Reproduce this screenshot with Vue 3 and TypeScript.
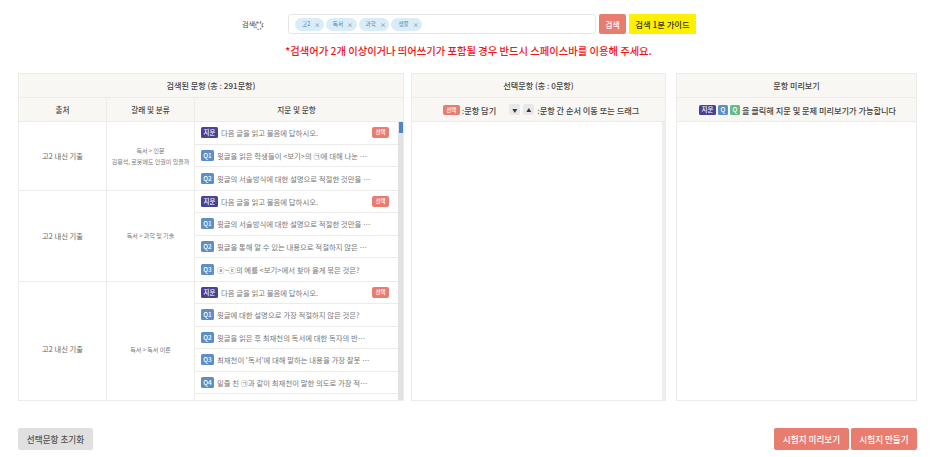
<script setup lang="ts">
interface Row { badge: string; text: string; pick?: boolean }
interface Group { source: string; cats: string[]; rows: Row[] }
const tags: string[] = ['고2', '독서', '과학', '생물']
const lead = '다음 글을 읽고 물음에 답하시오.'
const groups: Group[] = [
  { source: '고2 내신 기출', cats: ['독서 > 인문', '김용석, 로봇에도 인권이 있을까'], rows: [
    { badge: '지문', text: lead, pick: true },
    { badge: 'Q1', text: '윗글을 읽은 학생들이 <보기>의 ㉠에 대해 나눈 …' },
    { badge: 'Q2', text: '윗글의 서술방식에 대한 설명으로 적절한 것만을 …' },
  ] },
  { source: '고2 내신 기출', cats: ['독서 > 과학 및 기술'], rows: [
    { badge: '지문', text: lead, pick: true },
    { badge: 'Q1', text: '윗글의 서술방식에 대한 설명으로 적절한 것만을 …' },
    { badge: 'Q2', text: '윗글을 통해 알 수 있는 내용으로 적절하지 않은 …' },
    { badge: 'Q3', text: 'ⓐ~ⓔ의 예를 <보기>에서 찾아 옳게 묶은 것은?' },
  ] },
  { source: '고2 내신 기출', cats: ['독서 > 독서 이론'], rows: [
    { badge: '지문', text: lead, pick: true },
    { badge: 'Q1', text: '윗글에 대한 설명으로 가장 적절하지 않은 것은?' },
    { badge: 'Q2', text: '윗글을 읽은 후 최재천의 독서에 대한 독자의 반…' },
    { badge: 'Q3', text: "최재천이 '독서'에 대해 말하는 내용을 가장 잘못 …" },
    { badge: 'Q4', text: '밑줄 친 ㉠과 같이 최재천이 말한 의도로 가장 적…' },
    { badge: '', text: '' },
  ] },
]
</script>

<template>
  <div class="page">
    <div class="search">
      <span class="label">검색어:<svg class="busy" viewBox="0 0 12 12" width="10" height="10"><circle cx="6" cy="6" r="4" fill="#fff" stroke="#666" stroke-width="1.4" stroke-dasharray="1.6 1.6" /></svg></span>
      <div class="input">
        <span v-for="t in tags" :key="t" class="tag">{{ t }}<i>×</i></span>
      </div>
      <button class="btn coral search-btn">검색</button>
      <button class="guide">검색 1분 가이드</button>
    </div>
    <p class="warn">*검색어가 2개 이상이거나 띄어쓰기가 포함될 경우 반드시 스페이스바를 이용해 주세요.</p>

    <div class="panels">
      <section class="panel">
        <h2 class="head">검색된 문항 (총 : 291문항)</h2>
        <div class="cols">
          <div class="c1">출처</div>
          <div class="c2">갈래 및 분류</div>
          <div class="c3">지문 및 문항</div>
        </div>
        <div class="body">
          <div class="list">
            <div v-for="(g, i) in groups" :key="i" class="group">
              <div class="c1 source">{{ g.source }}</div>
              <div class="c2 cat"><span v-for="c in g.cats" :key="c">{{ c }}</span></div>
              <div class="c3 rows">
                <div v-for="r in g.rows" :key="r.badge" class="row">
                  <template v-if="r.badge">
                    <b class="badge" :class="r.badge === '지문' ? 'navy' : 'blue'">{{ r.badge }}</b>
                    <span class="txt">{{ r.text }}</span>
                    <b v-if="r.pick" class="pick">선택</b>
                  </template>
                </div>
              </div>
            </div>
          </div>
          <div class="track"><div class="thumb"></div></div>
        </div>
      </section>

      <section class="panel">
        <h2 class="head">선택문항 (총 : 0문항)</h2>
        <div class="sub shift">
          <b class="pick">선택</b><span>:문항 담기</span>
          <span class="arrows"><i>▼</i><i>▲</i></span><span>:문항 간 순서 이동 또는 드래그</span>
        </div>
        <div class="body"><div class="list"></div><div class="track thin"></div></div>
      </section>

      <section class="panel">
        <h2 class="head">문항 미리보기</h2>
        <div class="sub tight">
          <b class="badge navy">지문</b><b class="badge blue q">Q</b><b class="badge green q">Q</b>
          <span>을 클릭해 지문 및 문제 미리보기가 가능합니다</span>
        </div>
        <div class="body"></div>
      </section>
    </div>

    <div class="foot">
      <button class="btn gray">선택문항 초기화</button>
      <div class="right">
        <button class="btn coral wide">시험지 미리보기</button>
        <button class="btn coral">시험지 만들기</button>
      </div>
    </div>
  </div>
</template>

<style>
html, body { margin: 0; background: #fff; }
</style>

<style scoped>
.page { width: 936px; height: 457px; box-sizing: border-box; padding: 14px 19px 0 18px; overflow: hidden; font-family: "Noto Sans CJK KR", "Noto Sans", sans-serif; color: #555; }
.search { display: flex; align-items: center; height: 20px; padding-left: 224px; }
.label { width: 46px; position: relative; font-size: 7.2px; color: #444; }
.busy { position: absolute; left: 12px; top: 2px; }
.input { width: 308px; height: 20px; box-sizing: border-box; border: 1px solid #e6e6e6; border-radius: 3px; display: flex; align-items: center; gap: 2px; padding-left: 6px; }
.tag { height: 13px; padding: 0 3.5px 0 7px; border-radius: 7px; background: #d9edf8; color: #56809c; font-size: 5.6px; line-height: 13px; display: flex; gap: 4px; }
.tag i { font-style: normal; color: #777; font-size: 6px; }
button { border: 0; font-family: inherit; padding: 0; cursor: pointer; }
.btn { height: 22px; border-radius: 2px; font-size: 8.6px; font-weight: 500; width: 66px; }
.coral { background: #e87d6f; color: #fff; }
.gray { background: #e0e0e0; color: #555; width: 75px; }
.search-btn { width: 27px; height: 20px; margin-left: 3px; font-size: 7.8px; }
.guide { width: 67px; height: 20px; margin-left: 3px; background: #ffef00; color: #333; font-size: 8.3px; font-weight: 500; }
.warn { margin: 8px 0 0; height: 17px; font-size: 10.3px; line-height: 17px; font-weight: 500; color: #f01616; text-align: center; transform: translateX(1px); }
.panels { display: flex; margin-top: 14px; height: 328px; }
.panel { border: 1px solid #ebebeb; box-sizing: border-box; display: flex; flex-direction: column; }
.panel:nth-child(1) { width: 386px; }
.panel:nth-child(2) { width: 255px; margin-left: 7px; }
.panel:nth-child(3) { width: 241px; margin-left: 10px; }
.head { margin: 0; height: 24px; flex: none; background: #f8f7f3; border-bottom: 1px solid #ebebeb; box-sizing: border-box; font-size: 8.1px; line-height: 23px; font-weight: 500; text-align: center; color: #444; }
.cols { display: flex; height: 24px; flex: none; background: #f8f7f3; border-bottom: 1px solid #ebebeb; box-sizing: border-box; font-size: 7.6px; line-height: 23px; font-weight: 500; text-align: center; color: #444; padding-right: 5px; }
.c1 { width: 88px; flex: none; border-right: 1px solid #eeece6; box-sizing: border-box; }
.c2 { width: 88px; flex: none; border-right: 1px solid #eeece6; box-sizing: border-box; }
.c3 { flex: 1; min-width: 0; }
.sub { display: flex; align-items: center; justify-content: center; height: 24px; flex: none; background: #f8f7f3; border-bottom: 1px solid #ebebeb; box-sizing: border-box; font-size: 8.2px; color: #444; font-weight: 500; }
.sub .pick { margin: 0 2px 0 0; height: 10px; line-height: 10px; }
.shift { padding-left: 5px; }
.tight { padding-left: 2px; }
.tight .badge { margin-right: 2px; height: 10px; line-height: 10px; }
.arrows { display: flex; gap: 3px; margin: 0 3px 0 13px; }
.arrows i { width: 11px; height: 11px; background: #e8e8e8; border-radius: 2px; font-style: normal; font-size: 5px; line-height: 11px; text-align: center; color: #333; }
.body { flex: 1; display: flex; min-height: 0; overflow: hidden; }
.list { flex: 1; min-width: 0; overflow: hidden; }
.track { width: 5px; flex: none; background: #e2e2e2; }
.thin { width: 3px; background: #eeeeee; }
.thumb { height: 11px; margin-left: 1px; background: #4f86c6; }
.group { display: flex; border-bottom: 1px solid #ebebeb; }
.source { display: flex; align-items: center; justify-content: center; font-size: 7.3px; color: #666; }
.cat { display: flex; flex-direction: column; align-items: center; justify-content: center; gap: 2px; font-size: 6px; color: #777; }
.row { height: 22.5px; box-sizing: border-box; display: flex; align-items: center; padding: 0 9px 0 6px; border-bottom: 1px solid #ebebeb; }
.row:last-child { border-bottom: 0; }
.badge { height: 11px; border-radius: 1.5px; color: #fff; font-size: 6.4px; line-height: 11px; font-weight: 500; text-align: center; flex: none; }
.navy { width: 17px; background: #4a4296; }
.blue { width: 13px; background: #5d8fc4; }
.green { background: #68b98c; }
.q { width: 10px; }
.txt { flex: 1; min-width: 0; margin-left: 3px; font-size: 7.4px; color: #777; white-space: nowrap; overflow: hidden; }
.pick { width: 17px; height: 11px; flex: none; border-radius: 2px; background: #e87d6f; color: #fff; font-size: 5.4px; line-height: 11px; text-align: center; font-weight: 500; }
.foot { display: flex; justify-content: space-between; margin-top: 27px; }
.right { display: flex; gap: 2px; }
.wide { width: 75px; }
</style>
